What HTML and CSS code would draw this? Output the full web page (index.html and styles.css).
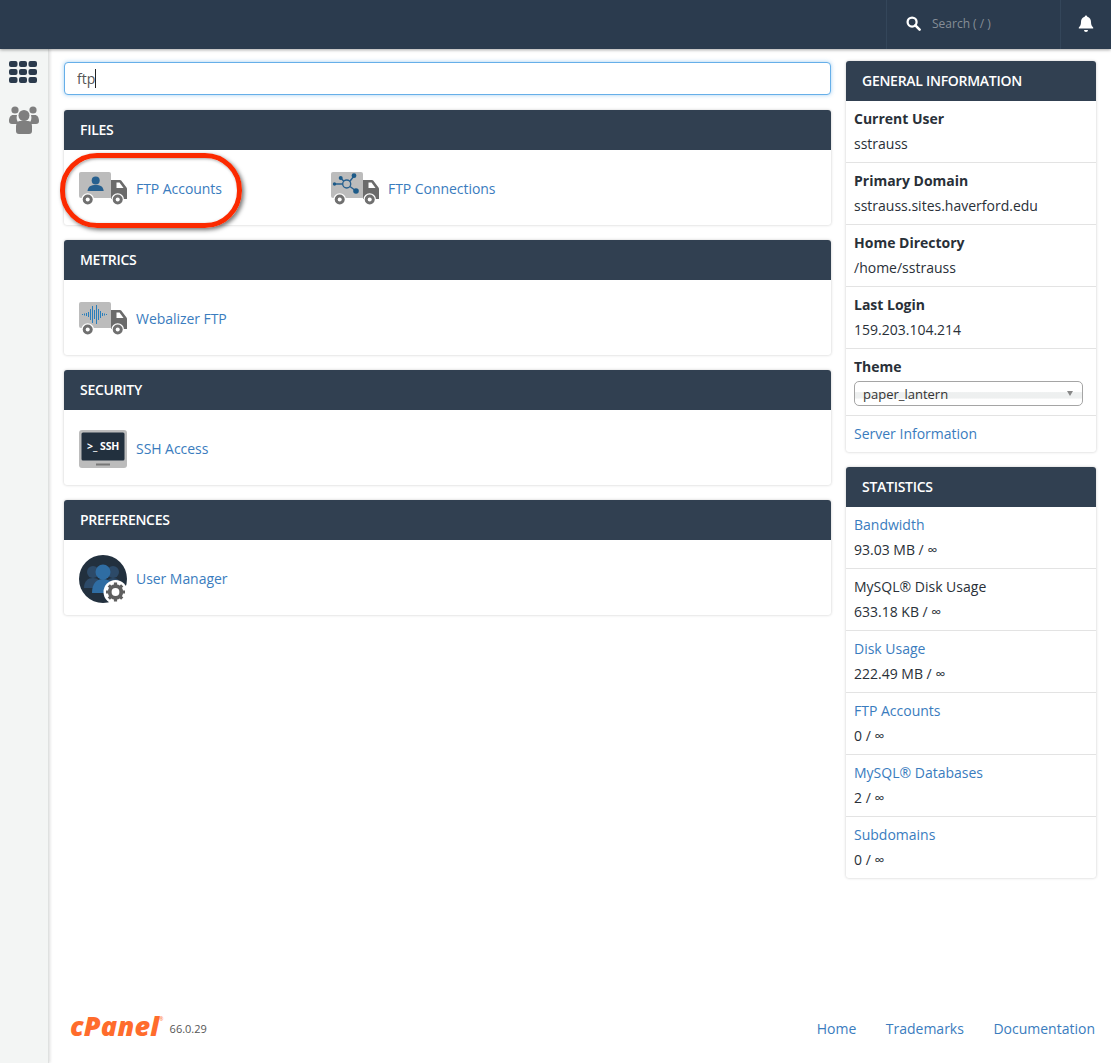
FILE: index.html
```html
<!DOCTYPE html>
<html lang="en">
<head>
<meta charset="utf-8">
<title>cPanel</title>
<link rel="stylesheet" href="styles.css">
</head>
<body>
<svg class="defs" width="0" height="0" aria-hidden="true">
  <symbol id="truck" viewBox="0 0 48 34">
    <path d="M2 0h28a2 2 0 0 1 2 2v24H2a2 2 0 0 1-2-2V2a2 2 0 0 1 2-2z" fill="#bcbcbc"/>
    <path d="M32 8h9a1.500 1.500 0 0 1 1.200.6l5.300 6.900q.5.600.5 1.500v10H32z" fill="#6b6b6b"/>
    <path d="M37.500 10.500h3l4 5.500h-7z" fill="#fff"/>
    <circle cx="8.700" cy="27.500" r="6.300" fill="#fff"/><circle cx="8.700" cy="27.500" r="5" fill="#707070"/><circle cx="8.700" cy="27.500" r="2" fill="#fff"/>
    <circle cx="38.700" cy="27.500" r="6.300" fill="#fff"/><circle cx="38.700" cy="27.500" r="5" fill="#707070"/><circle cx="38.700" cy="27.500" r="2" fill="#fff"/>
  </symbol>
</svg>

<header class="topbar">
  <div class="top-search">
    <svg class="search-icon" viewBox="0 0 16 16"><circle cx="6.500" cy="6.500" r="4.800" fill="none" stroke="#fff" stroke-width="2.400"/><path d="M10 10l4.500 4.500" stroke="#fff" stroke-width="2.800" stroke-linecap="round"/></svg>
    <span class="search-label">Search ( / )</span>
  </div>
  <div class="top-bell">
    <svg class="bell-icon" viewBox="0 0 16 17"><path d="M8 0.500a1.300 1.300 0 0 1 1.300 1.300c2.600.6 3.700 2.700 3.700 5.200 0 3 1 4.300 2.200 5.500v1H.8v-1C2 11.300 3 10 3 7c0-2.500 1.100-4.600 3.700-5.200A1.300 1.300 0 0 1 8 .5z" fill="#fff"/><path d="M6 15h4a2 2 0 0 1-4 0z" fill="#fff"/></svg>
  </div>
</header>

<div class="shell">
  <nav class="sidebar">
    <svg class="grid-icon" viewBox="0 0 28 22">
      <g fill="#2b3a4c">
        <rect x="0" y="0" width="8.500" height="6" rx="2"/><rect x="10" y="0" width="8" height="6" rx="2"/><rect x="19.500" y="0" width="8.500" height="6" rx="2"/>
        <rect x="0" y="8" width="8.500" height="6" rx="2"/><rect x="10" y="8" width="8" height="6" rx="2"/><rect x="19.500" y="8" width="8.500" height="6" rx="2"/>
        <rect x="0" y="16" width="8.500" height="6" rx="2"/><rect x="10" y="16" width="8" height="6" rx="2"/><rect x="19.500" y="16" width="8.500" height="6" rx="2"/>
      </g>
    </svg>
    <svg class="users-icon" viewBox="0 0 30 28">
      <g fill="#7f7f7f">
        <circle cx="6" cy="4" r="3.600"/><circle cx="24" cy="4" r="3.600"/>
        <path d="M0 15c0-4 2-6 4-6h4c-1 3 0 6 1 7v2H3c-2 0-3-1-3-3z"/>
        <path d="M30 15c0-4-2-6-4-6h-4c1 3 0 6-1 7v2h6c2 0 3-1 3-3z"/>
        <circle cx="15" cy="9.500" r="5.500"/>
        <path d="M7 20c0-3 2-5 4-5h8c2 0 4 2 4 5v5c0 2-1 3-3 3H10c-2 0-3-1-3-3z"/>
      </g>
    </svg>
  </nav>

  <div class="page">
    <div class="columns">
      <main class="main">
        <div class="filter-wrap">
          <input class="filter" type="text" value="ftp" aria-label="Filter">
          <span class="caret"></span>
        </div>

        <section class="panel">
          <h2 class="panel-head">FILES</h2>
          <div class="panel-body">
            <a class="item" href="#">
              <svg class="icon" viewBox="0 0 48 34"><use href="#truck"/><circle cx="16.700" cy="8.500" r="4" fill="#27608f"/><path d="M8.500 19c.5-4.500 3.500-6 8.200-6s7.500 1.500 8 6z" fill="#27608f"/></svg>
              <span>FTP Accounts</span>
              <span class="callout"></span>
            </a>
            <a class="item" href="#">
              <svg class="icon" viewBox="0 0 48 34"><use href="#truck"/><g fill="none" stroke="#27608f" stroke-width="1.400"><circle cx="15.700" cy="12" r="4"/><path d="M4 12h7.700M18.700 9.500l4.300-5.500M12.800 9.300l-3-3.300M19 14.500l6 4.500"/></g><g fill="#1c5a88"><circle cx="9.700" cy="6" r="2"/><circle cx="23" cy="3.700" r="2.400"/><circle cx="3.500" cy="12" r="1.700"/><circle cx="25" cy="19" r="2.800"/></g></svg>
              <span>FTP Connections</span>
            </a>
          </div>
        </section>

        <section class="panel">
          <h2 class="panel-head">METRICS</h2>
          <div class="panel-body">
            <a class="item" href="#">
              <svg class="icon" viewBox="0 0 48 34"><use href="#truck"/><path d="M3.500 12v1M5.500 11.500v2M7.500 11v3M9.500 10v5M11.500 7v11M13.500 4v17M15.500 8v9M17.500 3v19M19.500 7v11M21.500 9v7M23.500 11v3M25.500 11.500v2M27.500 12v1" stroke="#2a7ebb" stroke-width="1" fill="none"/></svg>
              <span>Webalizer FTP</span>
            </a>
          </div>
        </section>

        <section class="panel">
          <h2 class="panel-head">SECURITY</h2>
          <div class="panel-body">
            <a class="item" href="#">
              <svg class="icon icon-ssh" viewBox="0 0 48 38">
                <rect x="0" y="0" width="48" height="38" rx="3" fill="#bcbcbc"/>
                <rect x="2.500" y="2.500" width="43" height="28" rx="1.500" fill="#22303e"/>
                <rect x="17" y="33.500" width="14" height="2" fill="#777"/>
                <text class="ssh-text" x="8" y="20">&gt;_ SSH</text>
              </svg>
              <span>SSH Access</span>
            </a>
          </div>
        </section>

        <section class="panel">
          <h2 class="panel-head">PREFERENCES</h2>
          <div class="panel-body">
            <a class="item" href="#">
              <svg class="icon icon-user" viewBox="0 0 48 48">
                <circle cx="24" cy="24" r="24" fill="#22303e"/>
                <g fill="#2d4a68"><circle cx="14" cy="17" r="6"/><path d="M5 33c0-7 4-10 9-10s8 3 8 10z"/><circle cx="34" cy="17" r="6"/><path d="M26 33c0-7 4-10 8-10s9 3 9 10z"/></g>
                <circle cx="24" cy="17" r="7.500" fill="#2f6da3"/><path d="M13 38c0-10 5-14 11-14s11 4 11 14z" fill="#2f6da3"/>
                <circle cx="36.500" cy="37" r="12" fill="#fff"/>
                <circle cx="36.500" cy="37" r="5.800" fill="none" stroke="#5f5f5f" stroke-width="3.800"/>
                <path d="M36.500 27.500v3.500M36.500 43v3.500M27 37h3.500M42.500 37h3.500M29.800 30.300l2.500 2.500M40.700 41.200l2.500 2.500M29.800 43.700l2.500-2.500M40.700 32.800l2.500-2.500" stroke="#5f5f5f" stroke-width="3.200"/>
              </svg>
              <span>User Manager</span>
            </a>
          </div>
        </section>
      </main>

      <aside class="side">
        <section class="panel">
          <h2 class="panel-head">GENERAL INFORMATION</h2>
          <div class="row"><strong>Current User</strong><span>sstrauss</span></div>
          <div class="row"><strong>Primary Domain</strong><span>sstrauss.sites.haverford.edu</span></div>
          <div class="row"><strong>Home Directory</strong><span>/home/sstrauss</span></div>
          <div class="row"><strong>Last Login</strong><span>159.203.104.214</span></div>
          <div class="row row-theme">
            <strong>Theme</strong>
            <div class="select-wrap">
              <select class="theme-select" aria-label="Theme"><option>paper_lantern</option></select>
              <span class="select-arrow"></span>
            </div>
          </div>
          <div class="row row-link"><a href="#">Server Information</a></div>
        </section>

        <section class="panel">
          <h2 class="panel-head">STATISTICS</h2>
          <div class="row"><a href="#">Bandwidth</a><span>93.03 MB / ∞</span></div>
          <div class="row"><span>MySQL® Disk Usage</span><span>633.18 KB / ∞</span></div>
          <div class="row"><a href="#">Disk Usage</a><span>222.49 MB / ∞</span></div>
          <div class="row"><a href="#">FTP Accounts</a><span>0 / ∞</span></div>
          <div class="row"><a href="#">MySQL® Databases</a><span>2 / ∞</span></div>
          <div class="row"><a href="#">Subdomains</a><span>0 / ∞</span></div>
        </section>
      </aside>
    </div>

    <footer class="footer">
      <div class="brand"><span class="logo">cPanel<sup class="reg">®</sup></span><span class="version">66.0.29</span></div>
      <div class="foot-links"><a href="#">Home</a><a href="#">Trademarks</a><a href="#">Documentation</a></div>
    </footer>
  </div>
</div>
</body>
</html>
```
FILE: styles.css
```css
* { box-sizing: border-box; }
html, body { height: 100%; }
body {
  margin: 0;
  font-family: "Open Sans", sans-serif;
  font-size: 14px;
  color: #293a4a;
  background: #fff;
  display: flex;
  flex-direction: column;
  overflow: hidden;
}
a { color: #3a7cbe; text-decoration: none; }
.defs { position: absolute; }

.topbar {
  height: 49px;
  flex: none;
  background: #2b3b4e;
  display: flex;
  justify-content: flex-end;
  box-shadow: 0 1px 3px rgba(0,0,0,.35);
  position: relative;
}
.top-search {
  width: 175px;
  border-left: 1px solid #34465a;
  border-right: 1px solid #34465a;
  display: flex;
  align-items: center;
  gap: 11px;
  padding: 0 0 2px 19px;
}
.search-icon { width: 15px; height: 15px; }
.search-label { font-size: 12px; color: #868e97; }
.top-bell {
  width: 50px;
  display: flex;
  align-items: center;
  justify-content: flex-end;
  padding: 0 17px 2px 0;
}
.bell-icon { width: 16px; height: 17px; }

.shell { flex: 1; display: flex; min-height: 0; }
.sidebar {
  width: 49px;
  flex: none;
  background: #f3f5f4;
  border-right: 1px solid #dfe1e0;
  box-shadow: 1px 0 3px rgba(0,0,0,.14);
  display: flex;
  flex-direction: column;
  padding: 12px 0 0 9px;
  gap: 23px;
}
.grid-icon { width: 28px; height: 22px; }
.users-icon { width: 30px; height: 28px; }

.page {
  flex: 1;
  min-width: 0;
  display: flex;
  flex-direction: column;
  justify-content: space-between;
  padding: 12px 15px 20px 15px;
}
.columns { display: flex; gap: 15px; }
.main { width: 767px; display: flex; flex-direction: column; gap: 15px; }
.side { width: 250px; display: flex; flex-direction: column; gap: 15px; }

.filter-wrap { position: relative; display: flex; margin-top: 1px; }
.filter {
  flex: 1;
  height: 33px;
  padding: 0 12px;
  font: 14px "Open Sans", sans-serif;
  color: #555;
  border: 1px solid #66afe9;
  border-radius: 4px;
  outline: none;
  box-shadow: 0 0 4px rgba(102,175,233,.6);
  background: #fff;
}
.caret {
  position: absolute;
  left: 31px;
  top: 7px;
  width: 1px;
  height: 19px;
  background: #222;
}

.panel {
  background: #fff;
  border-radius: 3px;
  box-shadow: 0 0 3px rgba(0,0,0,.22);
}
.panel-head {
  margin: 0;
  height: 40px;
  padding: 0 16px 2px;
  display: flex;
  align-items: center;
  background: #314051;
  color: #fff;
  font-size: 14px;
  font-weight: 600;
  letter-spacing: -.28px;
  border-radius: 3px 3px 0 0;
}
.panel-body { height: 75px; display: flex; align-items: center; padding: 2px 0 0 15px; }
.item {
  position: relative;
  width: 252px;
  display: flex;
  align-items: center;
  gap: 9px;
  letter-spacing: -.05px;
}
.icon { width: 48px; height: 34px; flex: none; }
.icon-ssh { height: 38px; }
.icon-user { height: 48px; }
.ssh-text { font: 700 10.5px "Open Sans", sans-serif; fill: #fff; }
.callout {
  position: absolute;
  left: -19px;
  top: -19px;
  width: 182px;
  height: 75px;
  border: 5px solid #fb2a00;
  border-radius: 37px;
  box-shadow: 2px 2px 4px rgba(0,0,0,.55), inset 1px 1px 3px rgba(0,0,0,.35);
  pointer-events: none;
}

.row {
  border-top: 1px solid #e3e3e3;
  padding: 5px 8px 6px;
  line-height: 25px;
  display: flex;
  flex-direction: column;
  color: #293038;
}
.panel-head + .row { border-top: 0; }
.row strong { font-weight: 700; color: #293038; }
.row-theme { padding-bottom: 8px; }
.row-link { padding: 5px 8px 6px; }
.select-wrap { position: relative; height: 25px; margin-top: 2px; margin-bottom: 1px; width: 229px; }
.theme-select {
  appearance: none;
  -webkit-appearance: none;
  width: 100%;
  height: 25px;
  padding: 1px 8px 0;
  font: 13px "Open Sans", sans-serif;
  color: #333;
  border: 1px solid #a5a5a5;
  border-radius: 5px;
  background: linear-gradient(#fff 42%, #eef0f0 46%, #eef0f0 70%, #fff 74%);
}
.select-arrow {
  position: absolute;
  right: 10px;
  top: 10px;
  width: 0;
  height: 0;
  border-left: 3.5px solid transparent;
  border-right: 3.5px solid transparent;
  border-top: 5px solid #888;
}

.footer {
  display: flex;
  justify-content: space-between;
  align-items: center;
  padding: 0 1px 0 6px;
}
.brand { display: flex; align-items: center; gap: 6px; }
.logo {
  font-family: "Open Sans", sans-serif;
  font-weight: 800;
  font-style: italic;
  font-size: 27px;
  line-height: 26px;
  margin-bottom: 4px;
  color: #ff6c2c;
  letter-spacing: .2px;
}
.reg { font-size: 5px; vertical-align: 15px; line-height: 0; font-weight: 400; }
.version { font-size: 11px; color: #555; }
.foot-links { display: flex; gap: 29.5px; }
```
